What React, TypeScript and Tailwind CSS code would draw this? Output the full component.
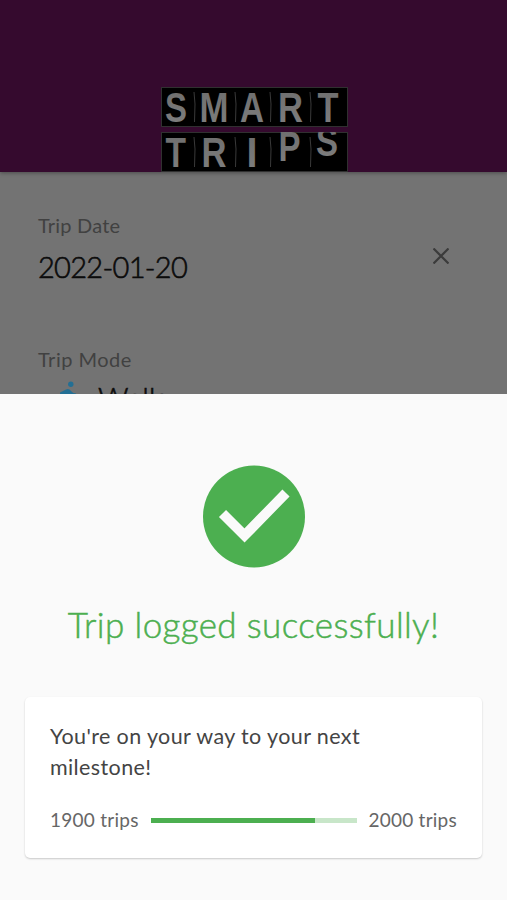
const topLetters = [
  { char: "S", x: 4, y: 35, width: 22 },
  { char: "M", x: 38.5, y: 35, width: 29 },
  { char: "A", x: 79, y: 35, width: 24 },
  { char: "R", x: 117, y: 35, width: 25 },
  { char: "T", x: 156.5, y: 35, width: 21 },
];

const bottomLetters = [
  { char: "T", x: 4.5, y: 35, width: 20.5 },
  { char: "R", x: 40.5, y: 35, width: 25 },
  { char: "I", x: 85.5, y: 35, width: 11 },
  { char: "P", x: 117.5, y: 29, width: 22 },
  { char: "S", x: 155, y: 24, width: 22 },
];

function FlapRow({ letters }: { letters: typeof topLetters }) {
  return (
    <svg width="187" height="40" viewBox="0 0 187 40" className="block overflow-hidden">
      <defs>
        <linearGradient id="flap" x1="0" y1="0" x2="0" y2="1">
          <stop offset="0" stopColor="#6c6c6c" />
          <stop offset="1" stopColor="#808080" />
        </linearGradient>
      </defs>
      <rect x="0.5" y="0.5" width="186" height="39" fill="#000" stroke="#303030" />
      {[33.5, 74.5, 109.5, 149.5].map((x) => (
        <path key={x} d={`M${x - 0.5} 5 L${x + 0.5} 17 L${x} 35`} stroke="#3a3a3a" fill="none" />
      ))}
      {letters.map((l) => (
        <text
          key={l.char}
          x={l.x}
          y={l.y}
          textLength={l.width}
          lengthAdjust="spacingAndGlyphs"
          fill="url(#flap)"
          className="font-['Liberation_Sans',sans-serif] text-[42px] font-bold"
        >
          {l.char}
        </text>
      ))}
    </svg>
  );
}

export default function App() {
  return (
    <div className="flex h-[900px] w-full flex-col overflow-hidden bg-[#737373] font-[Lato,sans-serif]">
      {/* Header */}
      <header className="flex h-[172px] shrink-0 flex-col items-center justify-end gap-[5px] bg-[#350a2e] pb-[0.5px] pl-[1px] shadow-[0_1px_4px_rgba(0,0,0,0.35)]">
        <FlapRow letters={topLetters} />
        <FlapRow letters={bottomLetters} />
      </header>

      {/* Form */}
      <main className="h-[222px] shrink-0 overflow-hidden px-[38px] pt-[41px]">
        <div className="flex h-[134px] justify-between">
          <div>
            <p className="text-[20px] leading-6 tracking-[0.2px] text-[#414141]">Trip Date</p>
            <p className="mt-3 text-[29px] leading-9 font-light tracking-[-0.7px] text-[#0b0b0b] [-webkit-text-stroke:0.6px]">
              2022-01-20
            </p>
          </div>
          <svg viewBox="0 0 16 16" className="mt-[35px] mr-[20px] size-4" stroke="#3b3b3b" strokeWidth="2.2">
            <path d="M0.5 0.5 L15.5 15.5 M15.5 0.5 L0.5 15.5" />
          </svg>
        </div>
        <p className="text-[20px] leading-6 tracking-[0.5px] text-[#414141]">Trip Mode</p>
        <div className="mt-[8px] flex items-start pl-[20px]">
          <svg width="20" height="30" viewBox="0 0 20 30" className="mt-[2px] shrink-0" fill="#236f94">
            <circle cx="12.8" cy="3.2" r="2.7" />
            <path d="M2 13 V11.5 L8 8.5 Q10 7.5 11.5 8.5 L13.5 10.5 Q15 12.5 18 12.5 V15 H12 V29 H9 V20 H6 V29 H3 V14 Z" />
          </svg>
          <span className="ml-5 text-[30px] leading-9 font-light tracking-[0.3px] text-[#0b0b0b] [-webkit-text-stroke:0.6px]">
            Walk
          </span>
        </div>
      </main>

      {/* Success sheet */}
      <section className="flex grow flex-col items-center bg-[#fafafa] px-[25px] pt-[71px]">
        <svg width="103" height="103" viewBox="0 0 103 103">
          <circle cx="52" cy="51.5" r="51" fill="#4caf50" />
          <path d="M20.5 48.5 L42.5 70.5 L84 28" fill="none" stroke="#fafafa" strokeWidth="10" />
        </svg>
        <h1 className="mt-[33px] text-[35px] leading-[46px] font-light tracking-[0.38px] whitespace-nowrap text-[#4caf50] [-webkit-text-stroke:0.5px]">
          Trip logged successfully!
        </h1>
        <div className="mt-[50px] h-[161px] w-full rounded-[5px] bg-white px-[25px] pt-[24px] shadow-[0_1px_2px_rgba(0,0,0,0.2)]">
          <p className="text-[21.5px] leading-[31px] tracking-[0.39px] text-[#444]">
            You're on your way to your next
            <br />
            milestone!
          </p>
          <div className="mt-[25px] flex items-center justify-between text-[19px] leading-6 tracking-[0.25px] whitespace-nowrap text-[#666]">
            <span>1900 trips</span>
            <div className="h-[5px] w-[206px] bg-[#c8e6c9]">
              <div className="h-full w-4/5 bg-[#4caf50]" />
            </div>
            <span>2000 trips</span>
          </div>
        </div>
      </section>
    </div>
  );
}
